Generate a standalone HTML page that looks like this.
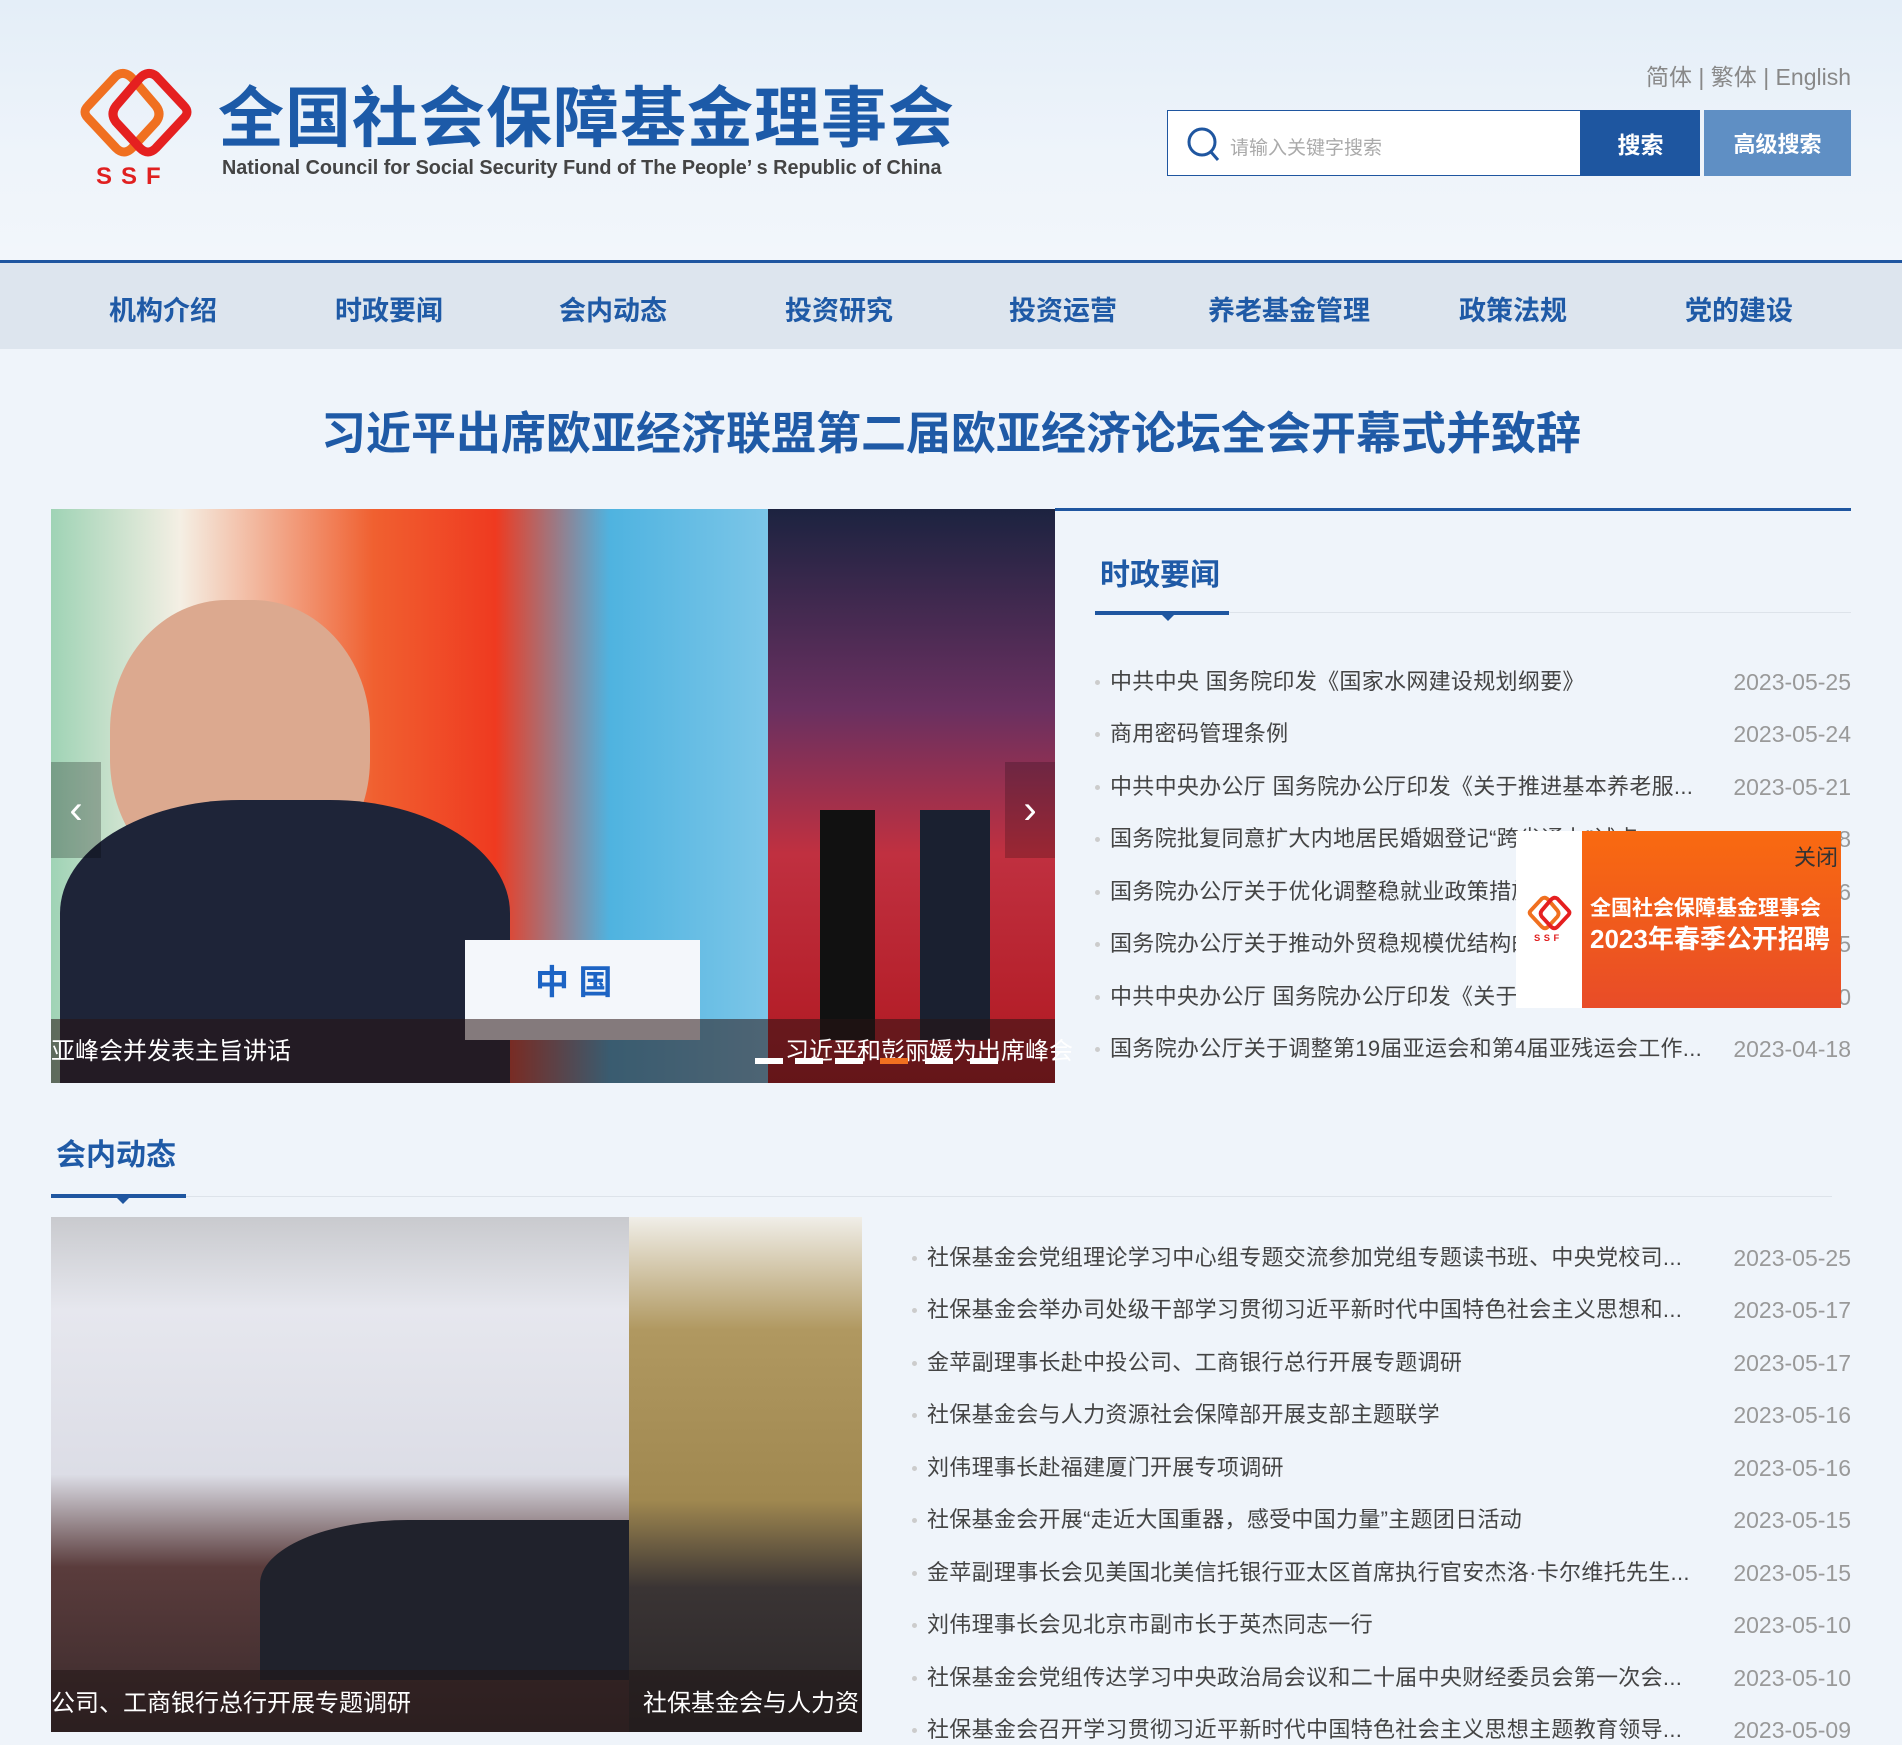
<!DOCTYPE html>
<html><head><meta charset="utf-8"><style>
*{margin:0;padding:0;box-sizing:border-box}
body{width:1902px;height:1741px;overflow:hidden;background:#eff4fa;font-family:"Liberation Sans","Noto Sans CJK SC",sans-serif;position:relative}
.a{position:absolute}
.hdr{left:0;top:0;width:1902px;height:261px;background:linear-gradient(180deg,#e4eef8 0%,#eef4fa 60%,#f2f6fb 100%)}
.bl{left:0;top:260px;width:1902px;height:3px;background:#1f56a0}
.nav{left:0;top:263px;width:1902px;height:86px;background:#dde5ee}
.nav span{position:absolute;top:32px;font-size:27px;font-weight:bold;color:#1f5aa6;line-height:32px}
.title{left:218px;top:78px;font-size:66px;font-weight:bold;color:#1c5aa8;letter-spacing:1px;line-height:80px;white-space:nowrap}
.sub{left:222px;top:157px;font-size:20px;color:#444;font-weight:bold;white-space:nowrap;transform:scaleX(.99);transform-origin:left}
.lang{right:51px;top:58px;font-size:23px;color:#888}
.sbox{left:1167px;top:110px;width:414px;height:66px;background:#fff;border:1px solid #1f56a0}
.sbox span{position:absolute;left:62px;top:22px;font-size:19px;color:#aaa}
.btn1{left:1581px;top:110px;width:119px;height:66px;background:#1e56a0;color:#fff;font-size:23px;font-weight:bold;text-align:center;line-height:70px}
.btn2{left:1704px;top:110px;width:147px;height:66px;background:#5f8fc4;color:#fff;font-size:22px;font-weight:bold;text-align:center;line-height:70px}
.head{left:0;width:1902px;top:404px;text-align:center;font-size:45px;font-weight:bold;color:#1f5aa6;line-height:60px}
.ul li{position:absolute;list-style:none;font-size:22px;letter-spacing:.3px;color:#444;white-space:nowrap;line-height:30px}
.ul li:before{content:"";position:absolute;left:-15px;top:13px;width:5px;height:5px;border-radius:50%;background:#ccc}
.dt{position:absolute;right:51px;font-size:23px;color:#999;line-height:30px}
.cap{color:#fff;font-size:24px;white-space:nowrap;line-height:30px}
</style></head><body>
<div class="a hdr"></div>
<svg class="a" style="left:78px;top:68px" width="118" height="120" viewBox="0 0 118 120">
<path d="M38 8 Q46 2 54 10 L78 38 Q84 46 78 54 L54 80 Q46 88 38 80 L10 50 Q4 44 10 38 Z" fill="none" stroke="#f07020" stroke-width="9"/>
<path d="M78 8 Q70 2 62 10 L38 38 Q32 46 38 54 L62 80 Q70 88 78 80 L106 50 Q112 44 106 38 Z" fill="none" stroke="#e52020" stroke-width="9"/>
<text x="18" y="116" font-family="Liberation Sans" font-weight="bold" font-size="24" fill="#e02020" letter-spacing="9">SSF</text>
</svg>
<div class="a title">全国社会保障基金理事会</div>
<div class="a sub">National Council for Social Security Fund of The People’ s Republic of China</div>
<div class="a lang">简体 | 繁体 | English</div>
<div class="a sbox"><svg style="position:absolute;left:18px;top:15px" width="36" height="38"><circle cx="16" cy="16" r="13" fill="none" stroke="#1f56a0" stroke-width="3"/><path d="M25 26 L32 34" stroke="#1f56a0" stroke-width="3"/></svg><span>请输入关键字搜索</span></div>
<div class="a btn1">搜索</div>
<div class="a btn2">高级搜索</div>
<div class="a bl"></div>
<div class="a nav"><span style="left:109px">机构介绍</span><span style="left:335px">时政要闻</span><span style="left:559px">会内动态</span><span style="left:785px">投资研究</span><span style="left:1009px">投资运营</span><span style="left:1208px">养老基金管理</span><span style="left:1459px">政策法规</span><span style="left:1685px">党的建设</span></div>
<div class="a head">习近平出席欧亚经济联盟第二届欧亚经济论坛全会开幕式并致辞</div>

<!-- slider -->
<div class="a" style="left:51px;top:509px;width:717px;height:574px;background:linear-gradient(90deg,#9fd3b5 0%,#f4efe4 18%,#f06030 45%,#ef3a20 62%,#4fb3e0 78%,#7cc6e8 100%)"></div>
<div class="a" style="left:110px;top:600px;width:260px;height:290px;border-radius:45%;background:#dca98f"></div>
<div class="a" style="left:60px;top:800px;width:450px;height:283px;border-radius:40% 40% 0 0;background:#1e2438"></div>
<div class="a" style="left:465px;top:940px;width:235px;height:100px;background:#f4f7fb"></div>
<div class="a" style="left:535px;top:955px;font-size:34px;font-weight:bold;color:#1d64c4">中 国</div>
<div class="a" style="left:768px;top:509px;width:287px;height:574px;background:linear-gradient(180deg,#1c2340 0%,#6a3060 35%,#c03040 60%,#b01820 100%)"></div>
<div class="a" style="left:820px;top:810px;width:55px;height:230px;background:#111"></div>
<div class="a" style="left:920px;top:810px;width:70px;height:230px;background:#1a2030"></div>
<div class="a" style="left:51px;top:1019px;width:1004px;height:64px;background:rgba(40,20,20,.55)"></div>
<div class="a cap" style="left:51px;top:1037px">亚峰会并发表主旨讲话</div>
<div class="a cap" style="left:785px;top:1037px">习近平和彭丽媛为出席峰会</div>
<div class="a" style="left:755px;top:1058px;width:300px;height:6px"><span style="position:absolute;left:0;width:28px;height:6px;background:#fff"></span><span style="position:absolute;left:40px;width:28px;height:6px;background:#fff"></span><span style="position:absolute;left:80px;width:28px;height:6px;background:#fff"></span><span style="position:absolute;left:125px;width:28px;height:6px;background:#f07020"></span><span style="position:absolute;left:170px;width:28px;height:6px;background:#fff"></span><span style="position:absolute;left:215px;width:28px;height:6px;background:#fff"></span></div>
<div class="a" style="left:51px;top:762px;width:50px;height:96px;background:rgba(0,0,0,.25);color:#fff;font-size:40px;line-height:96px;text-align:center">‹</div>
<div class="a" style="left:1005px;top:762px;width:50px;height:96px;background:rgba(0,0,0,.2);color:#fff;font-size:40px;line-height:96px;text-align:center">›</div>

<!-- news 1 -->
<div class="a" style="left:1055px;top:508px;width:796px;height:3px;background:#1f56a0"></div>
<div class="a" style="left:1100px;top:550px;font-size:30px;font-weight:bold;color:#1f5aa6">时政要闻</div>
<div class="a" style="left:1095px;top:612px;width:756px;height:1px;background:#dde3ea"></div>
<div class="a" style="left:1095px;top:611px;width:134px;height:4px;background:#1f56a0"></div>
<div class="a" style="left:1162px;top:615px;width:0;height:0;border-left:6px solid transparent;border-right:6px solid transparent;border-top:6px solid #1f56a0"></div>
<ul class="ul">
<li style="left:1110px;top:667px">中共中央 国务院印发《国家水网建设规划纲要》</li>
<li style="left:1110px;top:719px">商用密码管理条例</li>
<li style="left:1110px;top:772px">中共中央办公厅 国务院办公厅印发《关于推进基本养老服...</li>
<li style="left:1110px;top:824px">国务院批复同意扩大内地居民婚姻登记“跨省通办”试点</li>
<li style="left:1110px;top:877px">国务院办公厅关于优化调整稳就业政策措施</li>
<li style="left:1110px;top:929px">国务院办公厅关于推动外贸稳规模优结构的意见</li>
<li style="left:1110px;top:982px">中共中央办公厅 国务院办公厅印发《关于</li>
<li style="left:1110px;top:1034px">国务院办公厅关于调整第19届亚运会和第4届亚残运会工作...</li>
</ul>
<div class="dt" style="top:667px">2023-05-25</div>
<div class="dt" style="top:719px">2023-05-24</div>
<div class="dt" style="top:772px">2023-05-21</div>
<div class="dt" style="top:824px">2023-05-18</div>
<div class="dt" style="top:877px">2023-05-16</div>
<div class="dt" style="top:929px">2023-05-15</div>
<div class="dt" style="top:982px">2023-05-10</div>
<div class="dt" style="top:1034px">2023-04-18</div>
<!-- popup -->
<div class="a" style="left:1516px;top:831px;width:66px;height:177px;background:#fff"></div>
<svg class="a" style="left:1527px;top:893px" width="46" height="52" viewBox="0 0 118 120"><path d="M38 8 Q46 2 54 10 L78 38 Q84 46 78 54 L54 80 Q46 88 38 80 L10 50 Q4 44 10 38 Z" fill="none" stroke="#f07020" stroke-width="10"/><path d="M78 8 Q70 2 62 10 L38 38 Q32 46 38 54 L62 80 Q70 88 78 80 L106 50 Q112 44 106 38 Z" fill="none" stroke="#e52020" stroke-width="10"/><text x="18" y="116" font-family="Liberation Sans" font-weight="bold" font-size="24" fill="#e02020" letter-spacing="9">SSF</text></svg>
<div class="a" style="left:1582px;top:831px;width:259px;height:177px;background:linear-gradient(180deg,#f96a10,#e84c28)"></div>
<div class="a" style="left:1794px;top:840px;font-size:22px;color:#333">关闭</div>
<div class="a" style="left:1590px;top:892px;font-size:21px;font-weight:bold;color:#fff;white-space:nowrap">全国社会保障基金理事会</div>
<div class="a" style="left:1590px;top:919px;font-size:26px;font-weight:bold;color:#fff;white-space:nowrap">2023年春季公开招聘</div>

<!-- section 2 -->
<div class="a" style="left:56px;top:1130px;font-size:30px;font-weight:bold;color:#1f5aa6">会内动态</div>
<div class="a" style="left:51px;top:1196px;width:1781px;height:1px;background:#dde3ea"></div>
<div class="a" style="left:51px;top:1194px;width:135px;height:4px;background:#1f56a0"></div>
<div class="a" style="left:117px;top:1198px;width:0;height:0;border-left:6px solid transparent;border-right:6px solid transparent;border-top:6px solid #1f56a0"></div>
<div class="a" style="left:51px;top:1217px;width:578px;height:515px;background:linear-gradient(180deg,#c9cace 0%,#e6e7ee 18%,#dcdde6 50%,#5a3c3c 68%,#3a2a2c 100%)"></div>
<div class="a" style="left:260px;top:1520px;width:370px;height:160px;background:#20222c;border-radius:40% 0 0 0"></div>
<div class="a" style="left:629px;top:1217px;width:233px;height:515px;background:linear-gradient(180deg,#f0eee8 0%,#b09860 22%,#a08850 55%,#3a3434 72%,#2a2628 100%)"></div>
<div class="a" style="left:51px;top:1670px;width:811px;height:62px;background:rgba(30,20,20,.5)"></div>
<div class="a cap" style="left:51px;top:1689px">公司、工商银行总行开展专题调研</div>
<div class="a cap" style="left:643px;top:1689px">社保基金会与人力资</div>
<ul class="ul">
<li style="left:927px;top:1243px">社保基金会党组理论学习中心组专题交流参加党组专题读书班、中央党校司...</li>
<li style="left:927px;top:1295px">社保基金会举办司处级干部学习贯彻习近平新时代中国特色社会主义思想和...</li>
<li style="left:927px;top:1348px">金苹副理事长赴中投公司、工商银行总行开展专题调研</li>
<li style="left:927px;top:1400px">社保基金会与人力资源社会保障部开展支部主题联学</li>
<li style="left:927px;top:1453px">刘伟理事长赴福建厦门开展专项调研</li>
<li style="left:927px;top:1505px">社保基金会开展“走近大国重器，感受中国力量”主题团日活动</li>
<li style="left:927px;top:1558px">金苹副理事长会见美国北美信托银行亚太区首席执行官安杰洛·卡尔维托先生...</li>
<li style="left:927px;top:1610px">刘伟理事长会见北京市副市长于英杰同志一行</li>
<li style="left:927px;top:1663px">社保基金会党组传达学习中央政治局会议和二十届中央财经委员会第一次会...</li>
<li style="left:927px;top:1715px">社保基金会召开学习贯彻习近平新时代中国特色社会主义思想主题教育领导...</li>
</ul>
<div class="dt" style="top:1243px">2023-05-25</div>
<div class="dt" style="top:1295px">2023-05-17</div>
<div class="dt" style="top:1348px">2023-05-17</div>
<div class="dt" style="top:1400px">2023-05-16</div>
<div class="dt" style="top:1453px">2023-05-16</div>
<div class="dt" style="top:1505px">2023-05-15</div>
<div class="dt" style="top:1558px">2023-05-15</div>
<div class="dt" style="top:1610px">2023-05-10</div>
<div class="dt" style="top:1663px">2023-05-10</div>
<div class="dt" style="top:1715px">2023-05-09</div>
</body></html>
